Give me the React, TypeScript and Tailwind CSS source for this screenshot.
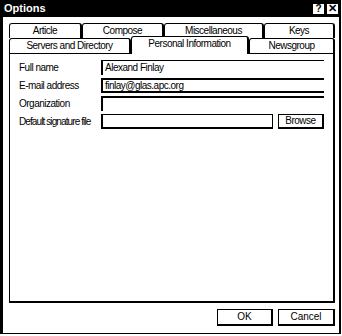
import React from "react";

const font = { fontFamily: '"Liberation Sans", Arial, sans-serif' };

function Tab({ label, w, selected = false }: { label: string; w: string; selected?: boolean }) {
  return (
    <div
      className={`${w} ${
        selected
          ? "h-[18px] -mt-[2px] -mb-[1px] border-t border-l border-r-2 border-black bg-white relative z-10 pb-[3px]"
          : "h-[15px] border-t border-l border-r-2 border-black"
      } rounded-t-[3px] flex items-center justify-center text-[10px] tracking-[-0.5px] leading-none text-black whitespace-nowrap`}
    >
      {label}
    </div>
  );
}

export default function App() {
  return (
    <div className="w-[342px] h-[336px] bg-white" style={font}>
      <div className="w-[341px] h-[334px] flex flex-col">
        <div className="h-[17px] bg-black flex items-center justify-between pl-[4px] pr-[2px]">
          <span className="text-white font-bold text-[11px] leading-none">Options</span>
          <div className="flex gap-[1px]">
            <div className="w-[13px] h-[12px] bg-white border border-black flex items-center justify-center text-black font-bold text-[10px] leading-none">?</div>
            <div className="w-[13px] h-[12px] bg-white border border-black flex items-center justify-center text-black font-bold text-[11px] leading-none">✕</div>
          </div>
        </div>
        <div className="flex-1 flex flex-col border-l-[3px] border-r-2 border-b border-black pl-[6px] pr-[4px] pt-[6px]">
          <div className="flex w-[326px]">
            <Tab label="Article" w="w-[73px]" />
            <Tab label="Compose" w="w-[82px]" />
            <Tab label="Miscellaneous" w="w-[100px]" />
            <Tab label="Keys" w="w-[71px]" />
          </div>
          <div className="flex w-[326px] items-end">
            <Tab label="Servers and Directory" w="w-[122px]" />
            <Tab label="Personal Information" w="w-[118px]" selected />
            <Tab label="Newsgroup" w="w-[86px]" />
          </div>
          <div className="w-[326px] h-[250px] border-t border-l border-r-2 border-b-2 border-black pt-[6px] pl-[9px] pr-[9px] flex flex-col gap-[3px] text-[10px] tracking-[-0.5px] text-black">
            <div className="flex items-center h-[15px]">
              <span className="w-[82px] shrink-0 whitespace-nowrap leading-none">Full name</span>
              <div className="flex-1 h-[15px] border-t border-l-2 border-black flex items-center pl-[2px] leading-none whitespace-nowrap">Alexand Finlay</div>
            </div>
            <div className="flex items-center h-[15px]">
              <span className="w-[82px] shrink-0 whitespace-nowrap leading-none">E-mail address</span>
              <div className="flex-1 h-[15px] border-t-2 border-l-2 border-b-2 border-black flex items-center pl-[2px] leading-none whitespace-nowrap">finlay@glas.apc.org</div>
            </div>
            <div className="flex items-center h-[15px]">
              <span className="w-[82px] shrink-0 whitespace-nowrap leading-none">Organization</span>
              <div className="flex-1 h-[15px] border-t-2 border-l-2 border-black"></div>
            </div>
            <div className="flex items-center h-[15px]">
              <span className="w-[82px] shrink-0 whitespace-nowrap leading-none tracking-[-0.9px]">Default signature file</span>
              <div className="w-[172px] shrink-0 h-[15px] border-t border-l-2 border-r border-b-2 border-black"></div>
              <div className="ml-[5px] flex-1 h-[15px] border-t border-l border-r-2 border-b-2 border-black flex items-center justify-center leading-none">Browse</div>
            </div>
          </div>
          <div className="w-[326px] flex justify-end gap-[5px] pt-[6px] text-[10px] text-black">
            <div className="w-[56px] h-[17px] border-t border-l border-r-2 border-b-2 border-black flex items-center justify-center leading-none">OK</div>
            <div className="w-[57px] h-[17px] border-t border-l border-r-2 border-b-2 border-black flex items-center justify-center leading-none">Cancel</div>
          </div>
        </div>
      </div>
    </div>
  );
}
